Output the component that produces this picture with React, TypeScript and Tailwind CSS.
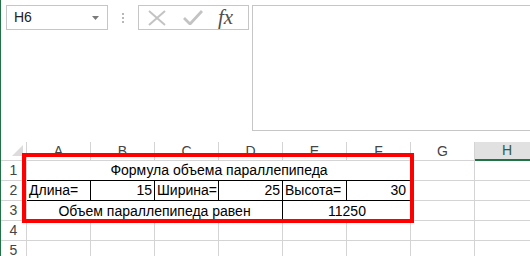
import React from "react";

const cols = ["A", "B", "C", "D", "E", "F", "G", "H"];
const grid = "border-r border-b border-[#d4d4d4]";

function RowHead({ n }: { n: number }) {
  return (
    <div className="h-[20px] flex items-center justify-center border-r border-b border-[#d4d4d4] text-[#444] text-[14px]">
      {n}
    </div>
  );
}

export default function App() {
  return (
    <div
      className="relative w-[530px] h-[256px] overflow-hidden bg-white border-l border-[#217346]"
      style={{ fontFamily: '"Liberation Sans", Arial, sans-serif' }}
    >
      {/* Formula bar area */}
      <div className="flex items-start pt-[5px] h-[142px]">
        <div className="ml-[5px] w-[102px] h-[25px] border border-[#c6c6c6] flex items-center pl-[7px] pr-[8px]">
          <span className="text-[14px] text-[#222] flex-1">H6</span>
          <svg width="7" height="4" viewBox="0 0 7 4">
            <path d="M0 0 L7 0 L3.5 4 Z" fill="#7a7a7a" />
          </svg>
        </div>
        <div className="w-[30px] h-[25px] flex flex-col items-center justify-center gap-[2px]">
          <div className="w-[2px] h-[2px] bg-[#b8b8b8]" />
          <div className="w-[2px] h-[2px] bg-[#b8b8b8]" />
          <div className="w-[2px] h-[2px] bg-[#b8b8b8]" />
        </div>
        <div className="w-[111px] h-[25px] border border-[#c6c6c6] flex items-center">
          <svg width="18" height="16" viewBox="0 0 18 16" className="ml-[9px]">
            <path d="M1 1 L17 15 M17 1 L1 15" stroke="#c3c3c3" strokeWidth="2" fill="none" />
          </svg>
          <svg width="20" height="15" viewBox="0 0 20 15" className="ml-[17px]">
            <path d="M1 8 L7 14 L19 1" stroke="#c3c3c3" strokeWidth="2.8" fill="none" />
          </svg>
          <span
            className="ml-[15px] text-[21px] italic text-[#505050] leading-none"
            style={{ fontFamily: '"Liberation Serif", "Times New Roman", serif' }}
          >
            fx
          </span>
        </div>
        <div className="ml-[3px] flex-1 h-[126px] border-l border-t border-b border-[#c6c6c6]" />
      </div>

      {/* Sheet grid */}
      <div className="grid grid-cols-[26px_repeat(8,64px)] text-[14px] text-black">
        {/* header row */}
        <div className="h-[19px] border-r border-b border-[#d4d4d4] relative">
          <svg width="11" height="11" viewBox="0 0 11 11" className="absolute right-[3px] bottom-[4px]">
            <path d="M11 0 L11 11 L0 11 Z" fill="#dcdcdc" />
          </svg>
        </div>
        {cols.map((c) =>
          c === "H" ? (
            <div
              key={c}
              className="h-[19px] bg-[#e1e1e1] border-b-2 border-[#217346] flex items-center justify-center text-[#2f5e45]"
            >
              {c}
            </div>
          ) : (
            <div key={c} className={`h-[19px] flex items-center justify-center text-[#444] ${grid}`}>
              {c}
            </div>
          )
        )}

        {/* row 1 */}
        <RowHead n={1} />
        <div className="col-span-6 h-[20px] border-b border-black flex items-center justify-center">
          Формула объема параллепипеда
        </div>
        <div className={`h-[20px] ${grid}`} />
        <div className={`h-[20px] ${grid}`} />

        {/* row 2 */}
        <RowHead n={2} />
        <div className="h-[20px] border-r border-b border-black flex items-center pl-[2px]">Длина=</div>
        <div className="h-[20px] border-r border-b border-black flex items-center justify-end pr-[2px]">15</div>
        <div className="h-[20px] border-r border-b border-black flex items-center pl-[2px]">Ширина=</div>
        <div className="h-[20px] border-r border-b border-black flex items-center justify-end pr-[2px]">25</div>
        <div className="h-[20px] border-r border-b border-black flex items-center pl-[2px]">Высота=</div>
        <div className="h-[20px] border-b border-black flex items-center justify-end pr-[5px]">30</div>
        <div className={`h-[20px] ${grid}`} />
        <div className={`h-[20px] ${grid}`} />

        {/* row 3 */}
        <RowHead n={3} />
        <div className="col-span-4 h-[20px] border-r border-black flex items-center justify-center">
          Объем параллепипеда равен
        </div>
        <div className="col-span-2 h-[20px] flex items-center justify-center">11250</div>
        <div className={`h-[20px] ${grid}`} />
        <div className={`h-[20px] ${grid}`} />

        {/* rows 4, 5 */}
        {[4, 5].map((r) => (
          <React.Fragment key={r}>
            <RowHead n={r} />
            {cols.map((c) => (
              <div key={c} className={`h-[20px] ${grid}`} />
            ))}
          </React.Fragment>
        ))}
      </div>

      {/* red highlight box */}
      <div className="absolute left-[21px] top-[153px] w-[392px] h-[70px] border-[4px] border-[#ff0000]" />
    </div>
  );
}
